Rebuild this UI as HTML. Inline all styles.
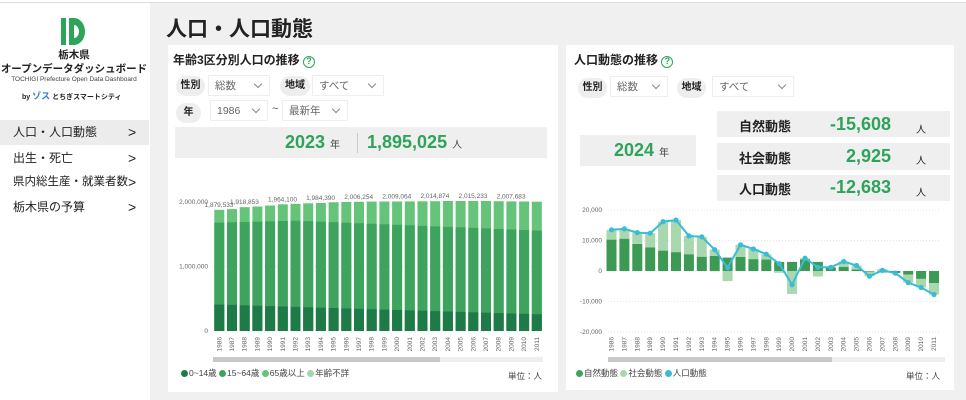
<!DOCTYPE html>
<html><head><meta charset="utf-8">
<style>
*{margin:0;padding:0;box-sizing:border-box}
body{width:966px;height:400px;overflow:hidden;background:#f0f0f0;font-family:"Liberation Sans","Noto Sans CJK JP",sans-serif;color:#222;position:relative;white-space:nowrap}
.abs{position:absolute}
#side{left:0;top:3px;width:150px;height:397px;background:#fff}
.nav{position:absolute;left:0;width:149px;height:25px;font-size:12px;line-height:25px;padding-left:13px}
.nav span{position:absolute;left:128px;top:0;font-size:14px}
.card{background:#fff}
.pill{position:absolute;background:#eee;border-radius:10px;font-size:10px;font-weight:bold;text-align:center;line-height:20px;height:20px}
.dd{position:absolute;border:1px solid #eee;font-size:10.5px;color:#666;height:21px;line-height:20px;padding-left:6px}
.dd:after{content:"";position:absolute;right:8px;top:5px;width:5px;height:5px;border-right:1px solid #888;border-bottom:1px solid #888;transform:rotate(45deg)}
.green{color:#2ea35a;font-weight:bold}
.kbox{position:absolute;background:#efefef}
.ax{font-size:6.5px;fill:#666}
.lg{font-size:8.5px;color:#444}
.dot{display:inline-block;width:7px;height:7px;border-radius:50%;margin-right:1px;vertical-align:-1px}
</style></head><body>
<div class="abs" style="left:0;top:0;width:966px;height:3px;background:#fff;border-bottom:1px solid #ddd"></div>
<div id="side" class="abs">
 <svg class="abs" style="left:61px;top:15px" width="24" height="28" viewBox="0 0 24 28"><rect x="0" y="0" width="5" height="27" fill="#2ea35a"/><path d="M8 0h5a11 13.5 0 0 1 0 27h-5zM13 7v13a5 6.5 0 0 0 0-13z" fill="#2ea35a" fill-rule="evenodd"/></svg>
 <div class="abs" style="left:0;top:45px;width:148px;text-align:center;font-size:10.5px;font-weight:bold;line-height:14px">栃木県<br>オープンデータダッシュボード</div>
 <div class="abs" style="left:0;top:73px;width:148px;text-align:center;font-size:6.5px;color:#444">TOCHIGI Prefecture Open Data Dashboard</div>
 <div class="abs" style="left:22px;top:86px;font-size:7px;font-weight:bold">by <span style="color:#3a7bd5;font-size:9px">ゾス</span> とちぎスマートシティ</div>
 <div class="nav" style="top:117px;background:#ececec">人口・人口動態<span>&gt;</span></div>
 <div class="nav" style="top:143px">出生・死亡<span>&gt;</span></div>
 <div class="nav" style="top:167px;font-size:11.5px">県内総生産・就業者数<span>&gt;</span></div>
 <div class="nav" style="top:192px">栃木県の予算<span>&gt;</span></div>
</div>
<div class="abs" style="left:166px;top:13px;font-size:21px;font-weight:bold">人口・人口動態</div>

<div class="abs card" style="left:168px;top:45px;width:390px;height:347px">
 <div class="abs" style="left:5px;top:6px;font-size:12px;font-weight:bold">年齢3区分別人口の推移 <span style="display:inline-block;width:12px;height:12px;border:1.5px solid #2ea35a;border-radius:50%;color:#2ea35a;font-size:9px;line-height:9px;text-align:center;vertical-align:0">?</span></div>
 <div class="pill" style="left:8px;top:31px;width:29px">性別</div>
 <div class="dd" style="left:40px;top:30px;width:62px">総数</div>
 <div class="pill" style="left:112px;top:31px;width:30px">地域</div>
 <div class="dd" style="left:144px;top:30px;width:72px">すべて</div>
 <div class="pill" style="left:8px;top:58px;width:25px">年</div>
 <div class="dd" style="left:42px;top:55px;width:58px">1986</div>
 <div class="abs" style="left:104px;top:58px;font-size:11px;color:#555">~</div>
 <div class="dd" style="left:114px;top:55px;width:66px">最新年</div>
 <div class="kbox" style="left:7px;top:82px;width:372px;height:31px"></div>
 <div class="abs green" style="left:117px;top:87px;font-size:18px">2023 <span style="font-size:10px;color:#444;font-weight:normal">年</span></div>
 <div class="abs" style="left:189px;top:88px;width:1px;height:20px;background:#ccc"></div>
 <div class="abs green" style="left:199px;top:87px;font-size:18px">1,895,025 <span style="font-size:10px;color:#444;font-weight:normal">人</span></div>
 <div class="abs lg" style="left:13px;top:322px"><span class="dot" style="background:#1e7a47"></span>0~14歳 <span class="dot" style="background:#3da35d"></span>15~64歳 <span class="dot" style="background:#66c47a"></span>65歳以上 <span class="dot" style="background:#9fd8a9"></span>年齢不詳</div>
 <div class="abs lg" style="left:340px;top:325px">単位：人</div>
</div>

<div class="abs card" style="left:566px;top:45px;width:388px;height:345px">
 <div class="abs" style="left:8px;top:6px;font-size:12px;font-weight:bold">人口動態の推移 <span style="display:inline-block;width:12px;height:12px;border:1.5px solid #2ea35a;border-radius:50%;color:#2ea35a;font-size:9px;line-height:9px;text-align:center">?</span></div>
 <div class="pill" style="left:12px;top:33px;width:29px">性別</div>
 <div class="dd" style="left:44px;top:31px;width:58px">総数</div>
 <div class="pill" style="left:111px;top:33px;width:29px">地域</div>
 <div class="dd" style="left:146px;top:31px;width:82px">すべて</div>
 <div class="kbox" style="left:14px;top:90px;width:116px;height:31px"></div>
 <div class="abs green" style="left:48px;top:95px;font-size:18px">2024 <span style="font-size:10px;color:#444;font-weight:normal">年</span></div>
 <div class="kbox" style="left:151px;top:66px;width:233px;height:26px"></div>
 <div class="kbox" style="left:151px;top:98px;width:233px;height:27px"></div>
 <div class="kbox" style="left:151px;top:130px;width:233px;height:26px"></div>
 <div class="abs" style="left:173px;top:71px;font-size:13px;font-weight:bold">自然動態</div>
 <div class="abs" style="left:173px;top:103px;font-size:13px;font-weight:bold">社会動態</div>
 <div class="abs" style="left:173px;top:134px;font-size:13px;font-weight:bold">人口動態</div>
 <div class="abs green" style="left:264px;top:69px;font-size:18px">-15,608</div>
 <div class="abs green" style="left:280px;top:101px;font-size:18px">2,925</div>
 <div class="abs green" style="left:264px;top:132px;font-size:18px">-12,683</div>
 <div class="abs" style="left:350px;top:76px;font-size:10px">人</div>
 <div class="abs" style="left:350px;top:107px;font-size:10px">人</div>
 <div class="abs" style="left:350px;top:139px;font-size:10px">人</div>
 <div class="abs lg" style="left:10px;top:322px"><span class="dot" style="background:#3da35d"></span>自然動態 <span class="dot" style="background:#a9d8ae"></span>社会動態 <span class="dot" style="background:#3bbcd6"></span>人口動態</div>
 <div class="abs lg" style="left:340px;top:325px">単位：人</div>
</div>

<svg class="abs" style="left:0;top:0" width="966" height="400" id="ch"></svg>
<script>
var s='';
function R(x,y,w,h,c){if(h<0){y+=h;h=-h}s+='<rect x="'+x.toFixed(1)+'" y="'+y.toFixed(1)+'" width="'+w+'" height="'+h.toFixed(1)+'" fill="'+c+'"/>'}
function T(x,y,t,a,extra){s+='<text x="'+x+'" y="'+y+'" class="ax" text-anchor="'+(a||'end')+'" '+(extra||'')+'>'+t+'</text>'}
var tot=[1879533,1890000,1918853,1930000,1945000,1964100,1972000,1980000,1984390,1995000,2000000,2003000,2006254,2008000,2008500,2009064,2011000,2013000,2014874,2015000,2015100,2015233,2013000,2010000,2007683,2005000];
var y0=331,k=64.5/1e6,x0=213,bw=12.7;
[[0,'0'],[1e6,'1,000,000'],[2e6,'2,000,000']].forEach(function(g){var y=y0-g[0]*k;s+='<line x1="213" x2="543" y1="'+y+'" y2="'+y+'" stroke="#e4e4e4" stroke-dasharray="1,2"/>';T(208,y+2,g[1])});
for(var i=0;i<26;i++){var x=x0+i*bw+1.3;var yo=410000-i*6000;var wk=i<6?1680000+i*5000:1710000-(i-6)*8000;
R(x,y0,10,-tot[i]*k,'#66c47a');R(x,y0,10,-wk*k,'#3da35d');R(x,y0,10,-yo*k,'#1e7a47');
T(x+7,337,1986+i,'end','transform="rotate(-90 '+(x+7)+' 337)"');}
var lb={0:'1,879,533',2:'1,918,853',5:'1,964,100',8:'1,984,390',11:'2,006,254',14:'2,009,064',17:'2,014,874',20:'2,015,233',23:'2,007,683'};
for(var j in lb){T(x0+j*bw+6,y0-tot[j]*k-3,lb[j],'middle')}
s+='<rect x="213" y="357" width="330" height="5" fill="#eee"/><rect x="213" y="357" width="227" height="5" fill="#c8c8c8"/>';
var nat=[10300,10600,8900,7700,6700,6200,5500,4700,5000,4400,4600,3900,3800,3000,3000,3800,3000,1200,1300,500,-200,-500,-700,-1200,-2600,-4000];
var soc=[3200,3200,3700,4700,9500,10500,6000,6500,2000,-3300,4000,3300,1700,-600,-7500,400,-1800,0,1800,1300,-1500,700,0,-2600,-2800,-3700];
var z=271,kk=30.5/1e4,xr=605,bw2=12.9,pts=[];
[[2e4,'20,000'],[1e4,'10,000'],[0,'0'],[-1e4,'-10,000'],[-2e4,'-20,000']].forEach(function(g){var y=z-g[0]*kk;s+='<line x1="608" x2="940" y1="'+y+'" y2="'+y+'" stroke="#e4e4e4" stroke-dasharray="1,2"/>';T(602,y+2,g[1])});
for(var i=0;i<26;i++){var x=xr+i*bw2+1.5,n=nat[i],o=soc[i];
if(n>=0){R(x,z,10,-n*kk,'#3d9a55');if(o>=0)R(x,z-n*kk,10,-o*kk,'#a9d8ae');else R(x,z,10,-o*kk,'#a9d8ae');}
else{R(x,z,10,-n*kk,'#3d9a55');if(o<0)R(x,z-n*kk,10,-o*kk,'#a9d8ae');else R(x,z,10,-o*kk,'#a9d8ae');}
pts.push((x+5).toFixed(1)+','+(z-(n+o)*kk).toFixed(1));
T(x+7,337,1986+i,'end','transform="rotate(-90 '+(x+7)+' 337)"');}
s+='<polyline points="'+pts.join(' ')+'" fill="none" stroke="#3bbcd6" stroke-width="2"/>';
pts.forEach(function(p){var q=p.split(',');s+='<circle cx="'+q[0]+'" cy="'+q[1]+'" r="2.6" fill="#3bbcd6"/>'});
s+='<rect x="608" y="357" width="337" height="5" fill="#eee"/><rect x="608" y="357" width="224" height="5" fill="#c8c8c8"/>';
document.getElementById('ch').innerHTML=s;
</script>
</body></html>
